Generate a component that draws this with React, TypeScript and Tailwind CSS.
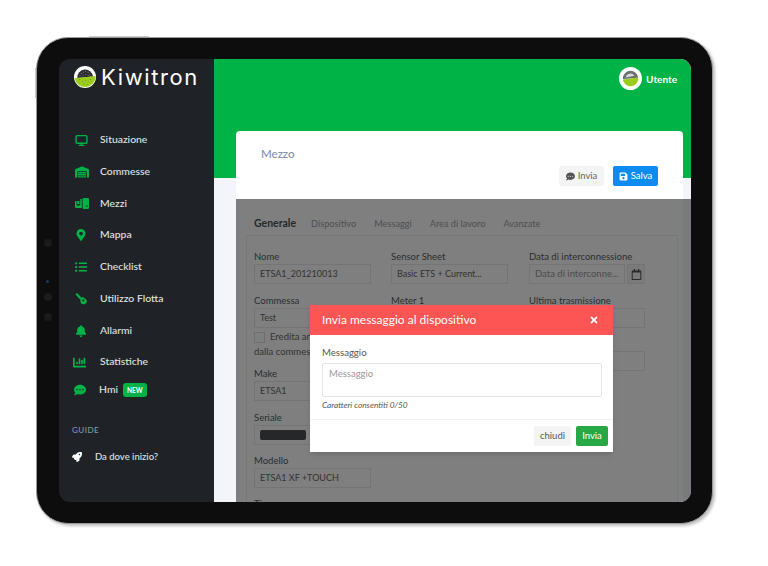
import { FaBell, FaChartBar, FaCommentDots, FaListUl, FaMapMarkerAlt, FaRegCalendar, FaRocket, FaSave, FaTimes, FaWarehouse } from 'react-icons/fa';
import { Monitor } from 'lucide-react';
import type { ReactNode } from 'react';

const GREEN = 'text-[#00b347]';

const DOME_DOTS = [
  [6.5, 10.5], [8, 8.2], [10.2, 6.6], [12.8, 6.2], [15.3, 7], [17.2, 8.8], [18, 11],
  [10, 10], [13, 9.4], [15.4, 10.6],
];
const LIME_DOTS = [
  [6, 15], [9.5, 16.5], [12.5, 15.5], [15.5, 17], [18, 15], [11, 19.5], [14.5, 20],
];

function KiwiLogo({ size }: { size: number }) {
  return (
    <svg width={size} height={size} viewBox="0 0 24 24" aria-hidden="true">
      <circle cx="12" cy="12" r="12" fill="#fff" />
      <path d="M3.6 13a8.6 8.6 0 0 1 17.2-1.2z" fill="#2a2e32" />
      <path d="M0.6 13.4 23.6 10.8A11.6 11.6 0 0 1 0.6 13.4z" fill="#9ccc1c" />
      <g fill="#e8e8e8">
        {DOME_DOTS.map(([cx, cy]) => <circle key={`${cx}-${cy}`} cx={cx} cy={cy} r="0.45" />)}
      </g>
      <g fill="#3c4a14">
        {LIME_DOTS.map(([cx, cy]) => <circle key={`${cx}-${cy}`} cx={cx} cy={cy} r="0.45" />)}
      </g>
    </svg>
  );
}

function UserAvatar() {
  return (
    <svg width="23" height="23" viewBox="0 0 24 24" aria-hidden="true">
      <circle cx="12" cy="12" r="12" fill="#fff" />
      <path d="M4 12.5a8 8 0 0 1 16-1z" fill="#6b7075" />
      <path d="M4 13 20 11a8 8 0 0 1-16 2z" fill="#9ccc1c" />
      <path d="M7 11a5 5 0 0 1 9-2z" fill="#d8dadc" />
    </svg>
  );
}

function ForkliftIcon() {
  return (
    <svg width="14" height="11" viewBox="0 0 14 11" fill="currentColor" aria-hidden="true">
      <path d="M0 3h1.6v4.6h3.6V1h1.6v9H1.2A1.2 1.2 0 0 1 0 8.8z" />
      <path d="M2.2 3h2.2v3H2.2z" />
      <rect x="7.6" y="0" width="6.4" height="11" rx="1.2" />
      <rect x="11.2" y="7.5" width="1.4" height="1.4" fill="#1f2327" />
    </svg>
  );
}

function FleetIcon() {
  return (
    <svg width="12" height="12" viewBox="0 0 12 12" fill="currentColor" aria-hidden="true">
      <path d="M0.4 1.2 2 0l4.4 4.6-1.8 1.4z" />
      <path d="M5 5.4 8 4l3.6 3v2.6L9.4 11.6 6 10.6z" />
      <rect x="7.4" y="6.6" width="1.8" height="1.8" fill="#1f2327" />
    </svg>
  );
}

function NavItem({ icon, label, h, gap = 'w-[25px]', pl = 'pl-[16px]', children }: {
  icon: ReactNode;
  label: string;
  h: string;
  gap?: string;
  pl?: string;
  children?: ReactNode;
}) {
  return (
    <div className={`flex items-center ${h} ${pl}`}>
      <span className={`flex shrink-0 items-center ${gap} ${GREEN}`}>{icon}</span>
      <span className="text-[10.4px] font-medium text-[#e0e3e6]">{label}</span>
      {children}
    </div>
  );
}

function Field({ label, value, width = 'w-[117px]', className = '', children }: {
  label: string;
  value?: string;
  width?: string;
  className?: string;
  children?: ReactNode;
}) {
  return (
    <div className={className}>
      <div className="h-[15px] text-[9.5px] leading-[15px] text-[#555b61]">{label}</div>
      <div className={`flex h-[20px] items-center border border-[#e8e9ec] px-[5px] text-[9px] text-[#666] ${width}`}>
        {value}
        {children}
      </div>
    </div>
  );
}

function Sidebar() {
  return (
    <aside className="w-[155px] shrink-0 bg-[#1f2327]">
      <div className="flex h-[56px] items-center gap-[5px] pb-[26px] pl-[15px] pt-[6px]">
        <KiwiLogo size={22} />
        <span className="text-[22px] leading-none tracking-[1.6px] text-white [font-family:Inter,sans-serif]">Kiwitron</span>
      </div>
      <div className="pt-[9px]">
        <NavItem h="h-[32px]" label="Situazione" icon={<Monitor size={13} strokeWidth={2.6} />} />
        <NavItem h="h-[32px]" label="Commesse" icon={<FaWarehouse size={14} />} />
        <NavItem h="h-[31px]" label="Mezzi" icon={<ForkliftIcon />} />
        <NavItem h="h-[32px]" label="Mappa" icon={<FaMapMarkerAlt size={12} />} />
        <NavItem h="h-[32px]" label="Checklist" icon={<FaListUl size={12} />} />
        <NavItem h="h-[32px]" label="Utilizzo Flotta" icon={<FleetIcon />} />
        <NavItem h="h-[32px]" label="Allarmi" icon={<FaBell size={12} />} />
        <NavItem h="h-[30px]" label="Statistiche" pl="pl-[14px]" gap="w-[27px]" icon={<FaChartBar size={13} />} />
        <NavItem h="h-[26px]" label="Hmi" pl="pl-[15px]" icon={<FaCommentDots size={12} />}>
          <span className="ml-[5px] rounded-[3px] bg-[#00b347] px-[4px] py-[2.5px] text-[6.5px] font-bold leading-[9px] text-white">NEW</span>
        </NavItem>
      </div>
      <div className="mt-[21px] pl-[13px] text-[8px] font-medium tracking-[0.5px] text-[#8d97a3]">GUIDE</div>
      <div className="mt-[14px] flex items-center pl-[13px] text-white">
        <span className="w-[23px]"><FaRocket size={10} /></span>
        <span className="text-[9.5px] font-medium text-[#e0e3e6]">Da dove inizio?</span>
      </div>
    </aside>
  );
}

function TabsForm() {
  return (
    <div className="pl-[10px] pr-[5px] pt-[14px]">
      <div className="flex h-[22px] items-center gap-[18px] pl-[8px] text-[9.2px] text-[#9aa0a6]">
        <span className="mr-[-3px] text-[10.5px] font-bold text-[#4d5257]">Generale</span>
        <span>Dispositivo</span>
        <span>Messaggi</span>
        <span>Area di lavoro</span>
        <span>Avanzate</span>
      </div>
      <div className="h-[400px] border border-[#eceef1] px-[7px] pt-[13px]">
        <div className="grid grid-cols-[137px_138px_1fr]">
          <div>
            <Field label="Nome" value="ETSA1_201210013" />
            <Field label="Commessa" value="Test" className="mt-[9px]" />
            <div className="mt-[2px] flex h-[15px] items-center">
              <span className="h-[11px] w-[11px] border border-[#ddd]" />
              <span className="ml-[5px] text-[9.5px] text-[#666]">Eredita anagrafica</span>
            </div>
            <div className="text-[9.5px] leading-[13px] text-[#666]">dalla commessa</div>
            <Field label="Make" value="ETSA1" className="mt-[8px]" />
            <Field label="Seriale" className="mt-[9px]">
              <span className="h-[10px] w-[46px] rounded-[2px] bg-[#4a4e52]" />
            </Field>
            <Field label="Modello" value="ETSA1 XF +TOUCH" className="mt-[8px]" />
            <div className="mt-[9px] h-[15px] text-[9.5px] text-[#555b61]">Tipo</div>
          </div>
          <div>
            <Field label="Sensor Sheet" value="Basic ETS + Current..." />
            <Field label="Meter 1" className="mt-[9px]" />
          </div>
          <div>
            <div className="h-[15px] whitespace-nowrap text-[9.5px] leading-[15px] text-[#555b61]">Data di interconnessione</div>
            <div className="flex h-[20px] w-[116px] gap-[2px]">
              <div className="flex w-[96px] items-center whitespace-nowrap border border-[#e8e9ec] px-[5px] text-[9.5px] text-[#999]">Data di interconne...</div>
              <div className="flex w-[18px] items-center justify-center border border-[#e8e9ec] bg-[#f4f4f4] text-[#555]"><FaRegCalendar size={11} /></div>
            </div>
            <Field label="Ultima trasmissione" value="2021-03-01 10:24" width="w-[116px]" className="mt-[9px] whitespace-nowrap" />
            <div className="mt-[23px] h-[20px] w-[116px] border border-[#e8e9ec]" />
          </div>
        </div>
      </div>
    </div>
  );
}

function SendModal() {
  return (
    <div className="absolute left-[96px] top-[246px] z-20 w-[303px] bg-white shadow-md">
      <div className="flex h-[30px] items-center justify-between bg-[#fd5454] pl-[12px] pr-[14px] text-white">
        <span className="text-[12px]">Invia messaggio al dispositivo</span>
        <FaTimes size={10} />
      </div>
      <div className="h-[85px] border-b border-[#f0f0f0] pl-[12px] pr-[11px] pt-[11px]">
        <div className="text-[9.6px] leading-[14px] text-[#555]">Messaggio</div>
        <div className="mt-[3px] h-[34px] w-[280px] rounded-[2px] border border-[#e4e4e4] px-[6px] py-[3px] text-[9.5px] text-[#999]">Messaggio</div>
        <div className="mt-[2px] text-[8.3px] italic leading-[12px] text-[#555]">Caratteri consentiti 0/50</div>
      </div>
      <div className="flex h-[32px] items-center justify-end gap-[5px] pr-[5px]">
        <button className="h-[20px] w-[37px] rounded-[2px] bg-[#f4f4f4] text-[9.5px] text-[#555]">chiudi</button>
        <button className="h-[20px] w-[32px] rounded-[2px] bg-[#28a745] text-[9.5px] text-white">Invia</button>
      </div>
    </div>
  );
}

export default function App() {
  return (
    <div className="h-[566px] w-[768px] overflow-hidden bg-white pl-[36px] pt-[37px] [font-family:Lato,sans-serif]">
      <div className="relative h-[487px] w-[677px] rounded-[32px] border border-[#9a9a9a] bg-[#0d0d0d] py-[21px] pl-[22px] shadow-[2px_2px_3px_rgba(0,0,0,0.25)]">
        {/* tasti e fotocamera del tablet */}
        <span className="absolute -top-[2px] left-[52px] h-[1px] w-[60px] bg-[#c9c9c9]" />
        <span className="absolute -left-[2px] top-[30px] h-[30px] w-[1px] bg-[#c9c9c9]" />
        <span className="absolute left-[7px] top-[201px] h-[8px] w-[8px] rounded-full bg-[#1b1b1b]" />
        <span className="absolute left-[9px] top-[242px] h-[3px] w-[3px] rounded-full bg-[#1c3a66]" />
        <span className="absolute left-[7px] top-[255px] h-[8px] w-[8px] rounded-full bg-[#1b1b1b]" />
        <span className="absolute left-[7px] top-[275px] h-[8px] w-[8px] rounded-full bg-[#1b1b1b]" />

        <div className="relative flex h-[443px] w-[632px] overflow-hidden rounded-[11px]">
          <Sidebar />
          <main className="relative flex-1 bg-[#f3f5fb]">
            <header className="flex h-[119px] items-start justify-end gap-[4px] bg-[#00b347] pr-[14px] pt-[8px]">
              <UserAvatar />
              <span className="pt-[5px] text-[10px] font-bold text-white">Utente</span>
            </header>
            <div className="relative -mt-[47px] ml-[22px] mr-[8px] rounded-t-[4px] bg-white">
              <div className="relative h-[68px]">
                <div className="pl-[25px] pt-[14px] text-[11.5px] font-medium text-[#7f93ad]">Mezzo</div>
                <div className="absolute right-[25px] top-[35px] flex gap-[9px]">
                  <button className="flex h-[20px] w-[45px] items-center justify-center gap-[3px] rounded-[2px] bg-[#f4f4f4] text-[9.5px] text-[#666]">
                    <FaCommentDots size={9} className="text-[#555]" />Invia
                  </button>
                  <button className="flex h-[20px] w-[45px] items-center justify-center gap-[3px] rounded-[2px] bg-[#0d8bf2] text-[9.5px] text-white">
                    <FaSave size={9} />Salva
                  </button>
                </div>
              </div>
              <TabsForm />
            </div>
            {/* overlay del dialog */}
            <div className="absolute bottom-0 left-[22px] right-0 top-[140px] z-10 bg-black/50" />
            <SendModal />
          </main>
        </div>
      </div>
    </div>
  );
}
